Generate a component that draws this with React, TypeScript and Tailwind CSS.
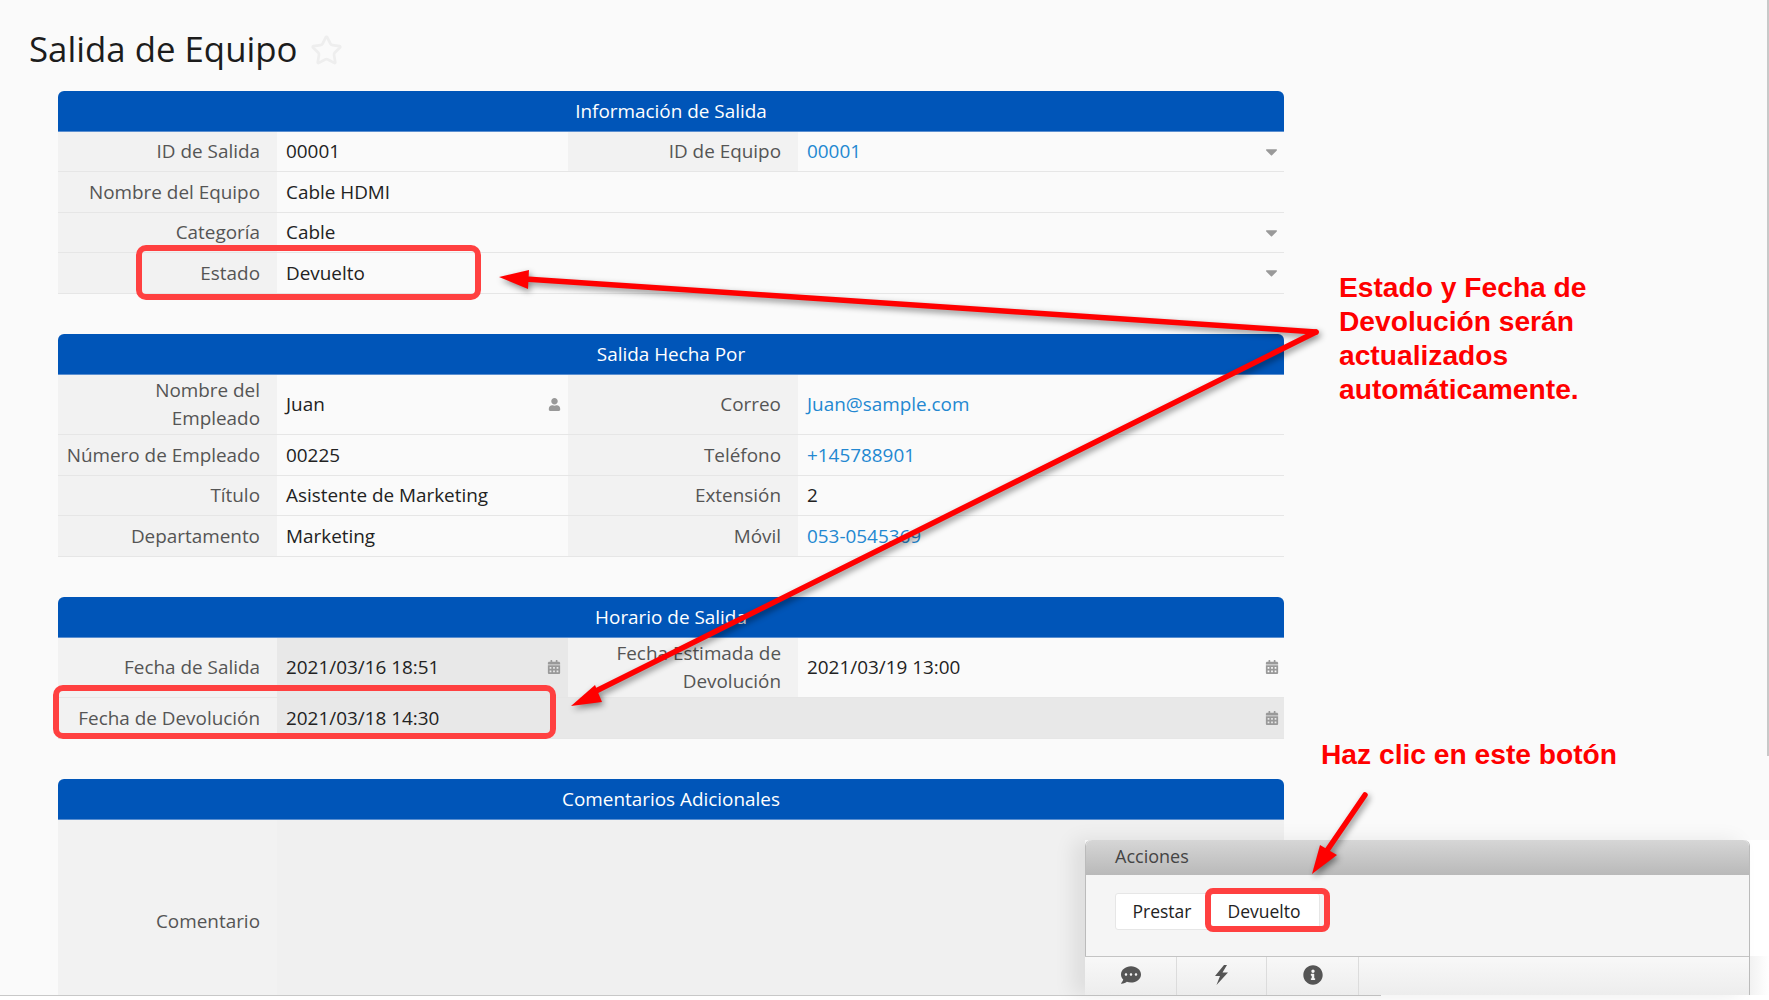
import type { ReactNode } from "react";
import { Star } from "lucide-react";
import { FaCalendarAlt, FaCaretDown, FaCommentDots, FaInfoCircle, FaUser } from "react-icons/fa";

function Label({ children, tall }: { children: ReactNode; tall?: boolean }) {
  return (
    <div className={`flex items-center justify-end border-b border-[#e6e6e6] bg-[#f2f2f2] pl-1 pr-[17px] text-right text-[#555] ${tall ? "h-[60.5px] leading-[28px]" : "h-[40.5px]"}`}>
      <span>{children}</span>
    </div>
  );
}

function Value({
  children,
  icon,
  link,
  gray,
  tall,
  span,
}: {
  children?: ReactNode;
  icon?: ReactNode;
  link?: boolean;
  gray?: boolean;
  tall?: boolean;
  span?: string;
}) {
  return (
    <div
      className={`flex items-center justify-between border-b border-[#e6e6e6] pl-[9px] pr-[5px] ${tall ? "h-[60.5px]" : "h-[40.5px]"} ${gray ? "bg-[#e8e8e8]" : ""} ${link ? "text-[#2388d1]" : "text-[#222]"} ${span ?? ""}`}
    >
      <span>{children}</span>
      {icon}
    </div>
  );
}

function Section({ title, children }: { title: string; children: ReactNode }) {
  return (
    <section className="mb-[40.5px] ml-[58px] w-[1226px]">
      <div className="flex h-[40.5px] items-center justify-center rounded-t-md border-b border-[#5b8fd0] bg-[#0055b8] text-white">{title}</div>
      <div className="grid grid-cols-[219px_291px_230px_486px]">{children}</div>
    </section>
  );
}

const caret = <FaCaretDown className="-mr-[2px] text-[19px] text-[#999]" />;
const calendar = <FaCalendarAlt className="text-[14px] text-[#999]" />;

export default function App() {
  return (
    <div className="relative h-[1000px] w-[1769px] overflow-hidden bg-white font-['Open_Sans',sans-serif] text-[18.9px]">
      <main className="h-[995px] overflow-hidden bg-[#fafafa]">
        <header className="flex h-[91px] items-start gap-[12px] pl-[29px] pt-[24px]">
          <h1 className="text-[34.8px] leading-[50px] text-[#1c1c1c]">Salida de Equipo</h1>
          <Star className="mt-[10px] h-[33px] w-[33px] text-[#eeeeee]" strokeWidth={2} />
        </header>

        <Section title="Información de Salida">
          <Label>ID de Salida</Label>
          <Value>00001</Value>
          <Label>ID de Equipo</Label>
          <Value link icon={caret}>00001</Value>
          <Label>Nombre del Equipo</Label>
          <Value span="col-span-3">Cable HDMI</Value>
          <Label>Categoría</Label>
          <Value span="col-span-3" icon={caret}>Cable</Value>
          <Label>Estado</Label>
          <Value span="col-span-3" icon={caret}>Devuelto</Value>
        </Section>

        <Section title="Salida Hecha Por">
          <Label tall>Nombre del<br />Empleado</Label>
          <Value tall icon={<FaUser className="mr-[2px] text-[13px] text-[#999]" />}>Juan</Value>
          <Label tall>Correo</Label>
          <Value tall link>Juan@sample.com</Value>
          <Label>Número de Empleado</Label>
          <Value>00225</Value>
          <Label>Teléfono</Label>
          <Value link>+145788901</Value>
          <Label>Título</Label>
          <Value>Asistente de Marketing</Value>
          <Label>Extensión</Label>
          <Value>2</Value>
          <Label>Departamento</Label>
          <Value>Marketing</Value>
          <Label>Móvil</Label>
          <Value link>053-0545369</Value>
        </Section>

        <Section title="Horario de Salida">
          <Label tall>Fecha de Salida</Label>
          <Value tall gray icon={<FaCalendarAlt className="mr-[2px] text-[14px] text-[#999]" />}>2021/03/16 18:51</Value>
          <Label tall>Fecha Estimada de Devolución</Label>
          <Value tall icon={calendar}>2021/03/19 13:00</Value>
          <Label>Fecha de Devolución</Label>
          <Value gray span="col-span-3" icon={calendar}>2021/03/18 14:30</Value>
        </Section>

        <Section title="Comentarios Adicionales">
          <div className="flex h-[204px] items-center justify-end bg-[#f2f2f2] pr-[17px] text-[#555]">Comentario</div>
          <div className="col-span-3 bg-[#f0f0f0]" />
        </Section>
      </main>
      <div className="h-px w-[1381px] bg-[#c8c8c8]" />

      {/* scrollbar */}
      <div className="absolute right-0 top-0 h-[756px] w-[2px] bg-[#c8c8c8]" />

      {/* floating actions panel */}
      <aside className="absolute left-[1085px] top-[840px] h-[155px] w-[684px] bg-white">
        <div className="absolute bottom-0 right-0 h-[39px] w-[19px] bg-gradient-to-r from-[#f2f2f2] to-white" />
        <div className="flex h-full w-[665px] flex-col rounded-t-md border-x border-[#bbb] shadow-[-12px_0_20px_rgba(0,0,0,0.08)]">
          <div className="flex h-[35px] items-center rounded-t-md bg-gradient-to-b from-[#d6d6d6] to-[#b9b9b9] pb-[2px] pl-[29px] text-[18px] text-[#444]">Acciones</div>
          <div className="flex-1 bg-[#f5f5f5] pl-[29px] pt-[18px] text-[17.5px] text-[#222]">
            <div className="flex h-[37px] w-fit rounded-[3px] border border-[#e6e6e6] bg-white pb-[1px]">
              <button className="w-[90px] pl-[2px]">Prestar</button>
              <button className="w-[113px] border-l border-[#e6e6e6] pl-[2px]">Devuelto</button>
            </div>
          </div>
          <div className="-ml-px flex h-[39px] items-stretch border-t border-[#c4c4c4] bg-gradient-to-b from-[#f8f8f8] to-[#ededed] text-[#555]">
            <div className="flex w-[92px] items-center justify-center border-r border-[#dcdcdc] pb-[2px]"><FaCommentDots className="text-[20px]" /></div>
            <div className="flex w-[90px] items-center justify-center border-r border-[#dcdcdc] pb-[2px]">
              <svg width="15" height="20" viewBox="0 0 15 20" fill="currentColor">
                <path d="M10 0L1 11L6 11L2.5 20L14 7.5L8.5 7.5L13 0Z" />
              </svg>
            </div>
            <div className="flex w-[92px] items-center justify-center border-r border-[#dcdcdc] pb-[2px]"><FaInfoCircle className="text-[20px]" /></div>
          </div>
        </div>
      </aside>

      {/* annotations */}
      <div className="absolute left-[136px] top-[245px] h-[55px] w-[345px] rounded-[10px] border-[6px] border-[#ff4040]" />
      <div className="absolute left-[53px] top-[685px] h-[54px] w-[503px] rounded-[10px] border-[6px] border-[#ff4040]" />
      <div className="absolute left-[1205px] top-[888px] h-[44px] w-[125px] rounded-[8px] border-[6px] border-[#ff4040]" />

      <svg className="pointer-events-none absolute left-0 top-0 drop-shadow-[2px_3px_3px_rgba(0,0,0,0.45)]" width="1769" height="1000" viewBox="0 0 1769 1000" fill="#ff0000" stroke="none">
        <path d="M1316 332L525 279" stroke="#ff0000" strokeWidth="5.5" strokeLinecap="round" fill="none" />
        <path d="M499 277L529 270L528 289Z" />
        <path d="M1316 332L590 694" stroke="#ff0000" strokeWidth="5.5" strokeLinecap="round" fill="none" />
        <path d="M571 706L595 685L602 702Z" />
        <path d="M1365 795L1326 852" stroke="#ff0000" strokeWidth="5.5" strokeLinecap="round" fill="none" />
        <path d="M1312 874L1320 845L1337 855Z" />
      </svg>

      <p className="absolute left-[1339px] top-[270px] w-[300px] font-['Liberation_Sans',sans-serif] text-[28.2px] font-bold leading-[34px] text-[#ff0000]">
        Estado y Fecha de Devolución serán actualizados automáticamente.
      </p>
      <p className="absolute left-[1321px] top-[737px] font-['Liberation_Sans',sans-serif] text-[28.2px] font-bold leading-[34px] text-[#ff0000]">
        Haz clic en este botón
      </p>
    </div>
  );
}
